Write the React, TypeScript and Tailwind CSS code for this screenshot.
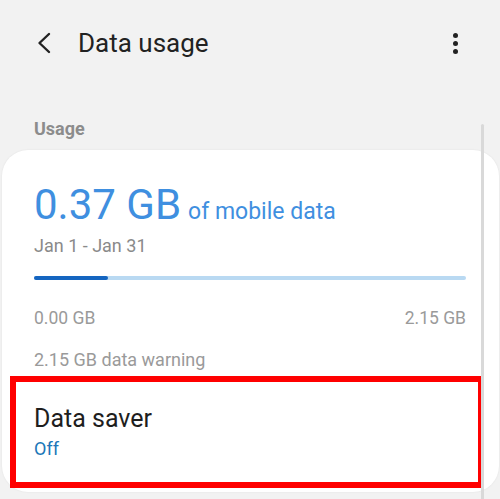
export default function App() {
  const used = 0.37;
  const limit = 2.15;
  const pct = (used / limit) * 100;

  return (
    <div
      className="relative w-[500px] h-[499px] overflow-hidden bg-[#f2f2f2]"
      style={{ fontFamily: 'Roboto, "Noto Sans", sans-serif' }}
    >
      {/* header */}
      <div className="flex h-[86px] items-center">
        <button className="ml-[36px] flex h-[22px] w-[16px] items-center justify-center">
          <svg width="16" height="22" viewBox="0 0 16 22" fill="none">
            <path d="M13 2 L3.5 11 L13 20" stroke="#222" strokeWidth="2.4" strokeLinecap="round" strokeLinejoin="round" />
          </svg>
        </button>
        <h1 className="ml-[26px] text-[26px] leading-[30px] text-[#222]">Data usage</h1>
        <div className="ml-auto mr-[42px] flex flex-col items-center gap-[3px]">
          <span className="h-[5px] w-[5px] rounded-full bg-[#222]" />
          <span className="h-[5px] w-[5px] rounded-full bg-[#222]" />
          <span className="h-[5px] w-[5px] rounded-full bg-[#222]" />
        </div>
      </div>

      <div className="mt-[32px] pl-[34px] text-[18px] font-bold leading-[22px] text-[#8c8c8c]">Usage</div>

      {/* card */}
      <div className="ml-[2px] mt-[10px] w-[497px] rounded-[26px] bg-white pb-[4px] pt-[34px] shadow-[0_0_2px_rgba(0,0,0,0.08)]">
        <div className="ml-[32px] w-[432px]">
          <div className="flex items-baseline gap-[7px] text-[#3f8fe0]">
            <span className="text-[42px] leading-[42px]">0.37 GB</span>
            <span className="text-[23px] leading-[26px]">of mobile data</span>
          </div>
          <div className="mt-[10px] text-[18px] leading-[20px] text-[#8a8a8a]">Jan 1 - Jan 31</div>

          <div className="mt-[20px] h-[4px] w-full rounded-full bg-[#b9d9f2]">
            <div className="h-full rounded-full bg-[#1565c0]" style={{ width: `${pct}%` }} />
          </div>

          <div className="mt-[28px] flex justify-between text-[17.5px] leading-[20px] text-[#9a9a9a]">
            <span>0.00 GB</span>
            <span>2.15 GB</span>
          </div>
          <div className="mt-[22px] text-[18px] leading-[20px] text-[#9a9a9a]">2.15 GB data warning</div>
        </div>

        <div className="ml-[8px] mt-[6px] h-[112px] w-[474px] border-[6px] border-[#ff0000] pl-[18px] pt-[22px]">
          <div className="text-[25px] leading-[30px] text-[#1e1e1e]">Data saver</div>
          <div className="mt-[4px] text-[18px] leading-[22px] text-[#2077b8]">Off</div>
        </div>
      </div>

      {/* scrollbar */}
      <div className="absolute left-[481px] top-[124px] h-[400px] w-[3px] rounded-full bg-[#d9d9d9]" />
    </div>
  );
}
